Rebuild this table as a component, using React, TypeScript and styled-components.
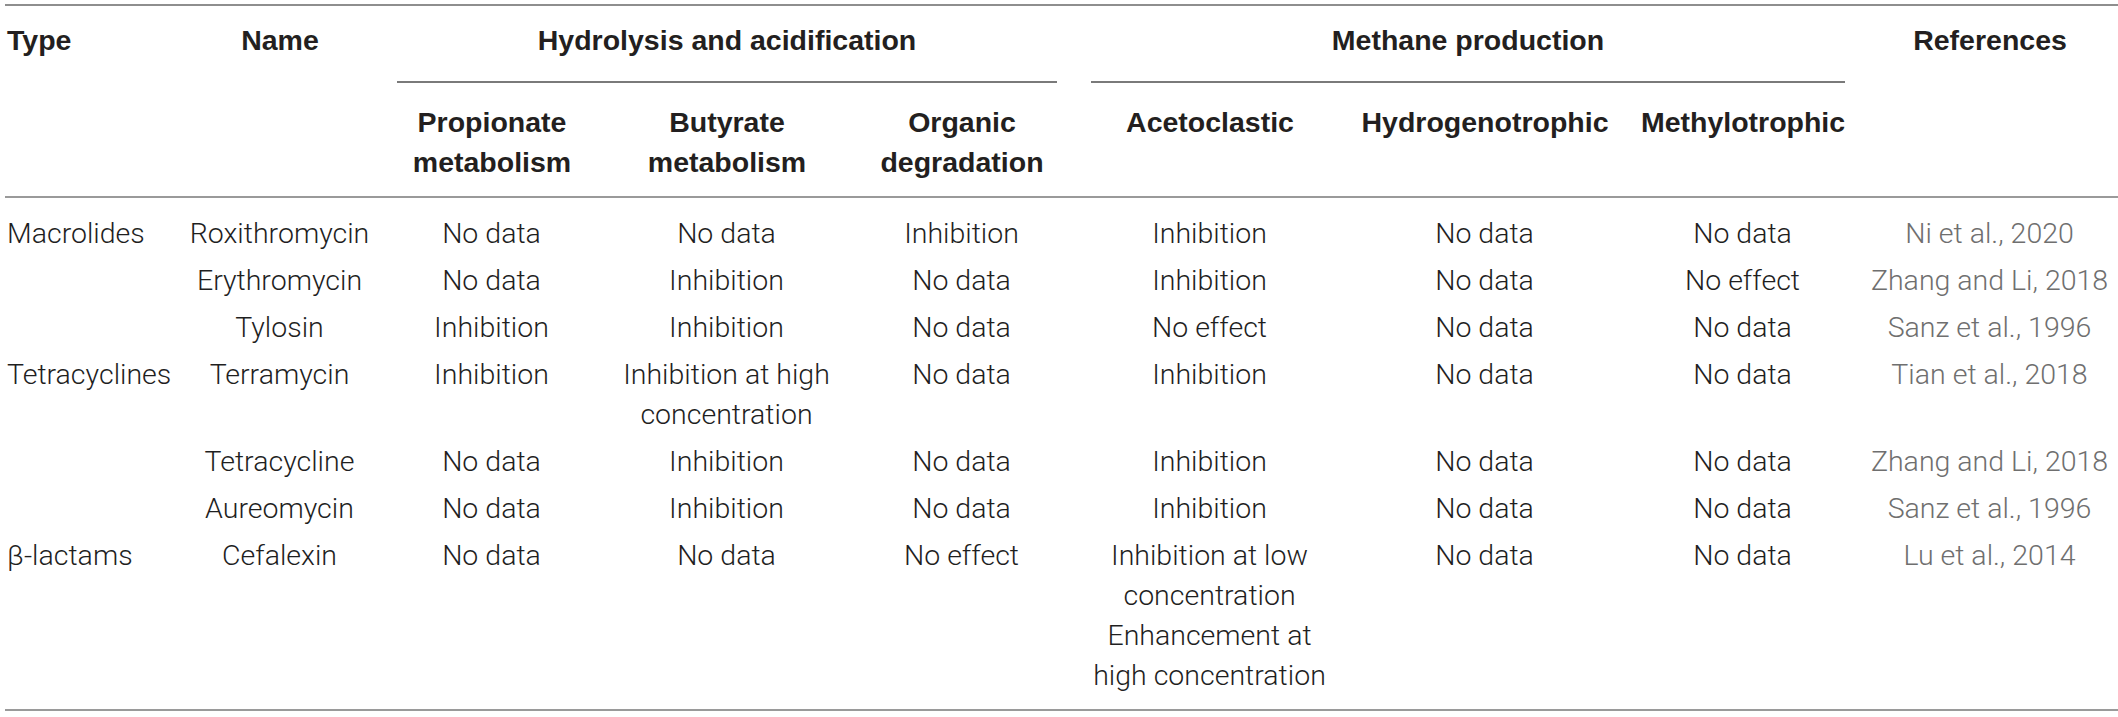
import styled, { createGlobalStyle } from "styled-components";

const Global = createGlobalStyle`
    body {
        margin: 0;
        background: #ffffff;
        font-family: "Liberation Sans", Arial, sans-serif;
    }
`

interface iRow {
    type: string;
    name: string;
    cells: string[][];
    refText: string;
}

const rows: iRow[] = [
    {type: "Macrolides", name: "Roxithromycin", cells: [["No data"], ["No data"], ["Inhibition"], ["Inhibition"], ["No data"], ["No data"]], refText: "Ni et al., 2020"},
    {type: "", name: "Erythromycin", cells: [["No data"], ["Inhibition"], ["No data"], ["Inhibition"], ["No data"], ["No effect"]], refText: "Zhang and Li, 2018"},
    {type: "", name: "Tylosin", cells: [["Inhibition"], ["Inhibition"], ["No data"], ["No effect"], ["No data"], ["No data"]], refText: "Sanz et al., 1996"},
    {type: "Tetracyclines", name: "Terramycin", cells: [["Inhibition"], ["Inhibition at high", "concentration"], ["No data"], ["Inhibition"], ["No data"], ["No data"]], refText: "Tian et al., 2018"},
    {type: "", name: "Tetracycline", cells: [["No data"], ["Inhibition"], ["No data"], ["Inhibition"], ["No data"], ["No data"]], refText: "Zhang and Li, 2018"},
    {type: "", name: "Aureomycin", cells: [["No data"], ["Inhibition"], ["No data"], ["Inhibition"], ["No data"], ["No data"]], refText: "Sanz et al., 1996"},
    {type: "β-lactams", name: "Cefalexin", cells: [["No data"], ["No data"], ["No effect"], ["Inhibition at low", "concentration", "Enhancement at", "high concentration"], ["No data"], ["No data"]], refText: "Lu et al., 2014"},
]

// column widths, left to right
const widths = [175, 200, 224, 246, 224, 272, 278, 238, 256]

const Lines = ({lines}: {lines: string[]}) => (
    <>
        {lines.map((l, i) => (
            <span key={i}>{l}{i < lines.length - 1 ? <br/> : null}</span>
        ))}
    </>
)

const App = () => {
  return (
    <>
      <Global/>
      <Table>
        <colgroup>
            {widths.map((w, i) => <col key={i} style={{width: w}}/>)}
        </colgroup>
        <thead>
            <tr>
                <TopHead rowSpan={2} $left>Type</TopHead>
                <TopHead rowSpan={2}>Name</TopHead>
                <GroupHead colSpan={3}><GroupLabel>Hydrolysis and acidification</GroupLabel></GroupHead>
                <GroupHead colSpan={3}><GroupLabel>Methane production</GroupLabel></GroupHead>
                <TopHead rowSpan={2}>References</TopHead>
            </tr>
            <tr>
                <SubHead>Propionate<br/>metabolism</SubHead>
                <SubHead>Butyrate<br/>metabolism</SubHead>
                <SubHead>Organic<br/>degradation</SubHead>
                <SubHead>Acetoclastic</SubHead>
                <SubHead>Hydrogenotrophic</SubHead>
                <SubHead>Methylotrophic</SubHead>
            </tr>
        </thead>
        <tbody>
            {rows.map((r, i) => (
                <Row key={i} $first={i === 0} $last={i === rows.length - 1}>
                    <Cell $left>{r.type}</Cell>
                    <Cell>{r.name}</Cell>
                    {r.cells.map((c, j) => <Cell key={j}><Lines lines={c}/></Cell>)}
                    <Cell $muted>{r.refText}</Cell>
                </Row>
            ))}
        </tbody>
      </Table>
    </>
  )
}

export default App;

const Table = styled.table`
    width: 2113px;
    margin: 4px 0 0 5px;
    table-layout: fixed;
    border-collapse: separate;
    border-spacing: 0;
    border-top: 2px solid #8e8e8e;
    border-bottom: 2px solid #9a9a9a;
`
const TopHead = styled.th<{$left?: boolean}>`
    padding: 14px 0 0 ${({$left}) => ($left ? "2px" : "0")};
    vertical-align: top;
    text-align: ${({$left}) => ($left ? "left" : "center")};
    font-size: 28.5px;
    line-height: 40px;
    font-weight: bold;
    color: #231f20;
    white-space: nowrap;
    border-bottom: 2px solid #9a9a9a;
`
const GroupHead = styled.th`
    padding: 14px 17px 0;
    vertical-align: top;
    font-size: 28.5px;
    line-height: 40px;
    font-weight: bold;
    color: #231f20;
    white-space: nowrap;
`
const GroupLabel = styled.div`
    padding-bottom: 21px;
    border-bottom: 2px solid #7a7a7a;
    text-align: center;
`
const SubHead = styled.th`
    padding: 19px 0 14px;
    vertical-align: top;
    text-align: center;
    font-size: 28.5px;
    line-height: 40px;
    font-weight: bold;
    color: #231f20;
    white-space: nowrap;
    border-bottom: 2px solid #9a9a9a;
`
const Row = styled.tr<{$first?: boolean; $last?: boolean}>`
    & > td {
        padding-top: ${({$first}) => ($first ? "16px" : "4px")};
        padding-bottom: ${({$last}) => ($last ? "13px" : "3px")};
    }
`
const Cell = styled.td<{$left?: boolean; $muted?: boolean}>`
    padding-left: ${({$left}) => ($left ? "2px" : "0")};
    vertical-align: top;
    text-align: ${({$left}) => ($left ? "left" : "center")};
    font-family: Roboto, "Liberation Sans", sans-serif;
    font-size: 28.5px;
    line-height: 40px;
    font-weight: 300;
    color: ${({$muted}) => ($muted ? "#6f6f6f" : "#1f1f1f")};
    white-space: nowrap;
`
